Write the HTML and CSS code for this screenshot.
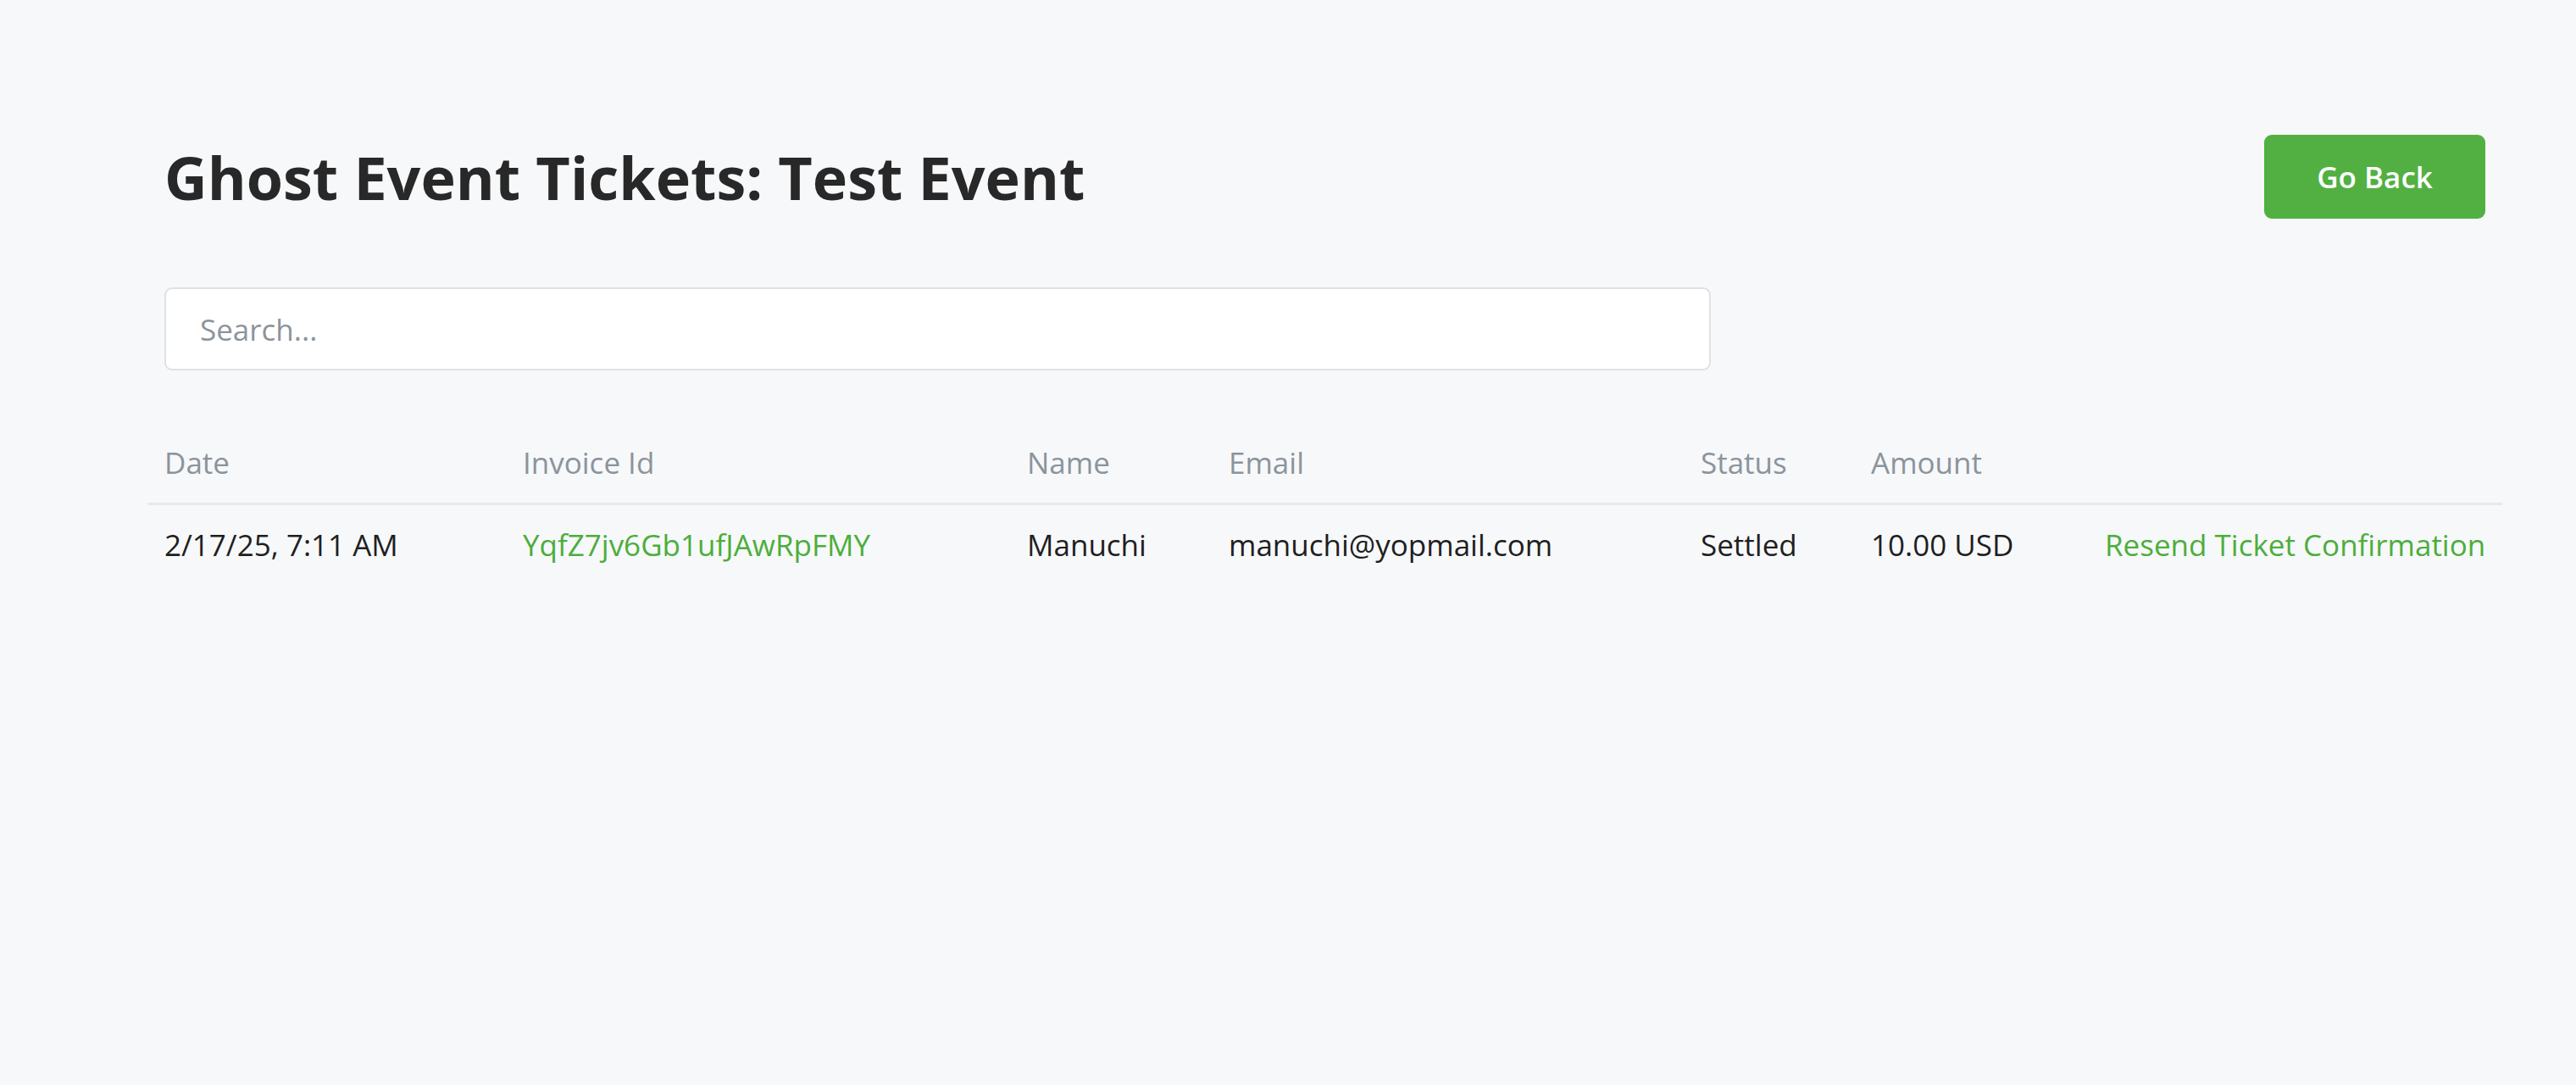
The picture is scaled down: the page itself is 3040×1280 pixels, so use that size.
FILE: index.html
```html
<!DOCTYPE html>
<html lang="en">
<head>
<meta charset="utf-8">
<title>Ghost Event Tickets: Test Event</title>
<link rel="stylesheet" href="styles.css">
</head>
<body>
<main class="page">
  <header class="page-header">
    <h1 class="page-title">Ghost Event Tickets: Test Event</h1>
    <a class="btn-back" href="#">Go Back</a>
  </header>
  <div class="search-wrap">
    <input class="search" type="text" placeholder="Search...">
  </div>
  <table class="tickets">
    <colgroup>
      <col class="c-date">
      <col class="c-invoice">
      <col class="c-name">
      <col class="c-email">
      <col class="c-status">
      <col class="c-amount">
      <col class="c-action">
    </colgroup>
    <thead>
      <tr>
        <th>Date</th>
        <th>Invoice Id</th>
        <th>Name</th>
        <th>Email</th>
        <th>Status</th>
        <th>Amount</th>
        <th></th>
      </tr>
    </thead>
    <tbody>
      <tr>
        <td>2/17/25, 7:11 AM</td>
        <td><a class="link" href="#">YqfZ7jv6Gb1ufJAwRpFMY</a></td>
        <td>Manuchi</td>
        <td>manuchi@yopmail.com</td>
        <td>Settled</td>
        <td>10.00 USD</td>
        <td class="action"><a class="link" href="#">Resend Ticket Confirmation</a></td>
      </tr>
    </tbody>
  </table>
</main>
</body>
</html>
```
FILE: styles.css
```css
html, body {
  margin: 0;
  padding: 0;
}

body {
  background: #f7f8fa;
  font-family: "Open Sans", "Noto Sans", sans-serif;
  color: #212121;
  min-height: 1280px;
}

.page {
  padding: 159px 107px 0 194px;
}

.page-header {
  display: flex;
  justify-content: space-between;
  align-items: center;
}

.page-title {
  margin: 0;
  font-size: 70px;
  font-weight: 700;
  line-height: 1.2;
  color: #282828;
}

.btn-back {
  display: inline-flex;
  align-items: center;
  justify-content: center;
  height: 99px;
  width: 261px;
  box-sizing: border-box;
  background: #52b042;
  color: #ffffff;
  border-radius: 9px;
  font-size: 35px;
  font-weight: 600;
  text-decoration: none;
}

.search-wrap {
  margin-top: 81px;
  width: 1825px;
}

.search {
  display: block;
  width: 100%;
  height: 98px;
  box-sizing: border-box;
  padding: 0 40px;
  border: 2px solid #dfe1e6;
  border-radius: 9px;
  background: #ffffff;
  font-family: "Open Sans", "Noto Sans", sans-serif;
  font-size: 35px;
  color: #212121;
  outline: none;
}

.search::placeholder {
  color: #8b949c;
}

.tickets {
  margin: 62px -20px 0;
  width: calc(100% + 40px);
  border-collapse: collapse;
  table-layout: fixed;
  font-size: 35px;
  line-height: 54px;
}

.c-date { width: 423px; }
.c-invoice { width: 595px; }
.c-name { width: 238px; }
.c-email { width: 557px; }
.c-status { width: 201px; }
.c-amount { width: 276px; }
.c-action { width: 489px; }

.tickets th {
  padding: 20px;
  text-align: left;
  font-weight: 400;
  color: #8b949c;
  border-bottom: 3px solid #e8e9ec;
}

.tickets td {
  padding: 20px;
  text-align: left;
  white-space: nowrap;
  color: #1f1f1f;
}

.tickets td.action {
  text-align: right;
}

.link {
  color: #4cae3b;
  text-decoration: none;
}
```
